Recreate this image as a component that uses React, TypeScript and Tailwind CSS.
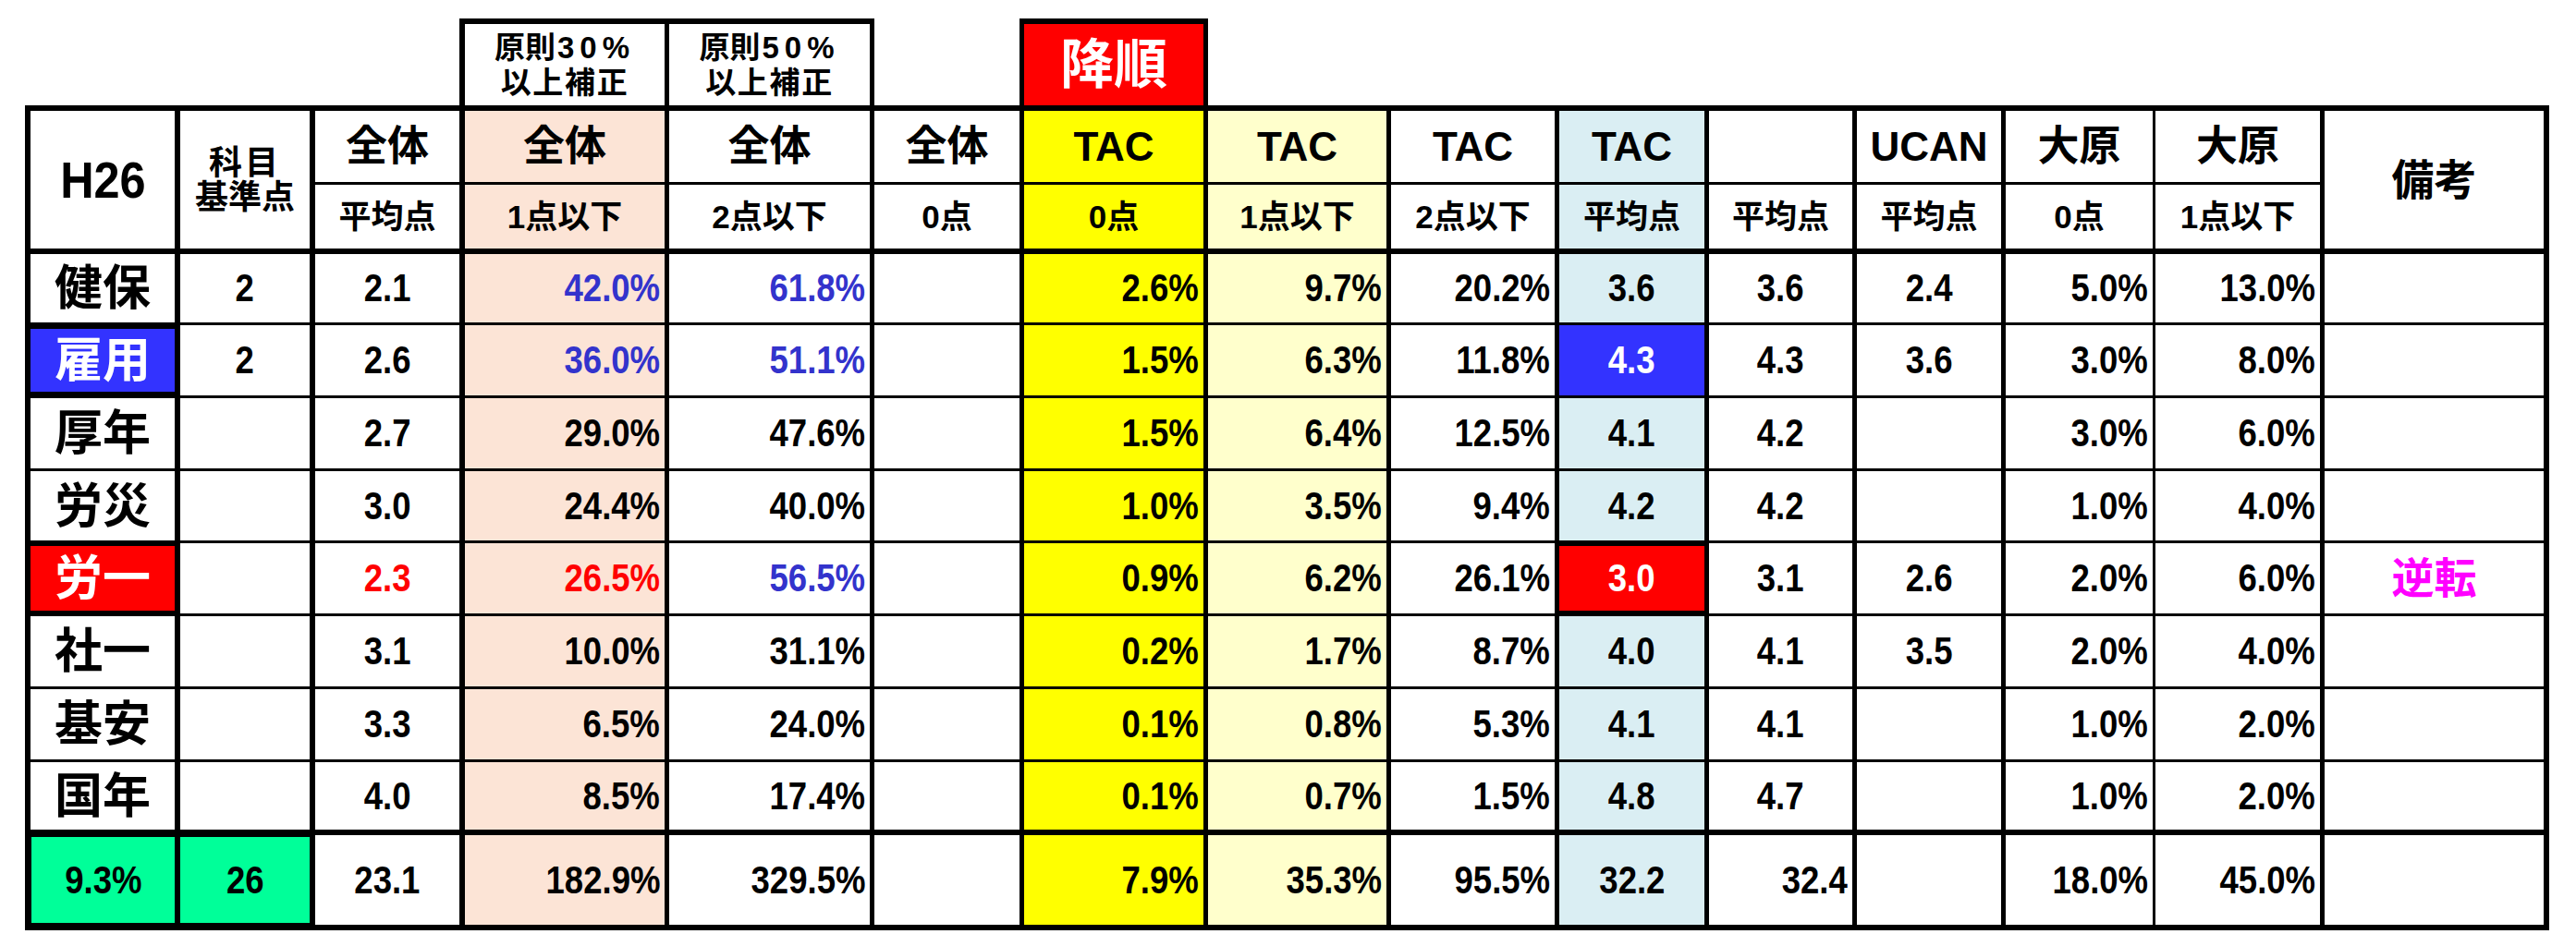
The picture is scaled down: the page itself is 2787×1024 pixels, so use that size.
import React from 'react';

const FONT = "[font-family:'Liberation_Sans','Noto_Sans_CJK_JP',sans-serif]";

const RB = [
  'border-r-[6px]', 'border-r-[6px]', 'border-r-[6px]', 'border-r-[5px]', 'border-r-[5px]',
  'border-r-[5px]', 'border-r-[5px]', 'border-r-[5px]', 'border-r-[5px]', 'border-r-[5px]',
  'border-r-[5px]', 'border-r-[5px]', 'border-r-[3px]', 'border-r-[5px]', 'border-r-[6px]',
];

const BG = [
  'bg-white', 'bg-white', 'bg-white', 'bg-[#fce4d6]', 'bg-white', 'bg-white', 'bg-[#ffff00]',
  'bg-[#ffffcc]', 'bg-white', 'bg-[#daeef3]', 'bg-white', 'bg-white', 'bg-white', 'bg-white', 'bg-white',
];

const ALIGN = ['c', 'c', 'c', 'r', 'r', 'c', 'r', 'r', 'r', 'c', 'c', 'c', 'r', 'r', 'c'];

const H1 = ['全体', '全体', '全体', '全体', 'TAC', 'TAC', 'TAC', 'TAC', '', 'UCAN', '大原', '大原'];
const H2 = ['平均点', '1点以下', '2点以下', '0点', '0点', '1点以下', '2点以下', '平均点', '平均点', '平均点', '0点', '1点以下'];

type Row = { name: string; kind: string; vals: string[] };

const DATA: Row[] = [
  { name: '健保', kind: '', vals: ['2', '2.1', 'b:42.0%', 'b:61.8%', '', '2.6%', '9.7%', '20.2%', '3.6', '3.6', '2.4', '5.0%', '13.0%', ''] },
  { name: '雇用', kind: 'B', vals: ['2', '2.6', 'b:36.0%', 'b:51.1%', '', '1.5%', '6.3%', '11.8%', 'B:4.3', '4.3', '3.6', '3.0%', '8.0%', ''] },
  { name: '厚年', kind: '', vals: ['', '2.7', '29.0%', '47.6%', '', '1.5%', '6.4%', '12.5%', '4.1', '4.2', '', '3.0%', '6.0%', ''] },
  { name: '労災', kind: '', vals: ['', '3.0', '24.4%', '40.0%', '', '1.0%', '3.5%', '9.4%', '4.2', '4.2', '', '1.0%', '4.0%', ''] },
  { name: '労一', kind: 'R', vals: ['', 'r:2.3', 'r:26.5%', 'b:56.5%', '', '0.9%', '6.2%', '26.1%', 'R:3.0', '3.1', '2.6', '2.0%', '6.0%', 'm:逆転'] },
  { name: '社一', kind: '', vals: ['', '3.1', '10.0%', '31.1%', '', '0.2%', '1.7%', '8.7%', '4.0', '4.1', '3.5', '2.0%', '4.0%', ''] },
  { name: '基安', kind: '', vals: ['', '3.3', '6.5%', '24.0%', '', '0.1%', '0.8%', '5.3%', '4.1', '4.1', '', '1.0%', '2.0%', ''] },
  { name: '国年', kind: '', vals: ['', '4.0', '8.5%', '17.4%', '', '0.1%', '0.7%', '1.5%', '4.8', '4.7', '', '1.0%', '2.0%', ''] },
];

const TOTAL = ['G:9.3%', 'G:26', '23.1', '182.9%', '329.5%', '', '7.9%', '35.3%', '95.5%', '32.2', '>:32.4', '', '18.0%', '45.0%', ''];

function parse(raw: string) {
  const m = raw.match(/^([bBrRmG>]):(.*)$/);
  if (m) return { flag: m[1], v: m[2] };
  return { flag: '', v: raw };
}

function ValueCell({ raw, c, rowPos }: { raw: string; c: number; rowPos: 'data' | 'last' | 'total' }) {
  const { flag, v } = parse(raw);
  let bg = BG[c];
  if (flag === 'B') bg = 'bg-[#3333ff]';
  if (flag === 'R') bg = 'bg-[#ff0000]';
  if (flag === 'G') bg = 'bg-[#00ff99]';
  let color = 'text-black';
  if (flag === 'b') color = 'text-[#3333cc]';
  if (flag === 'r') color = 'text-[#ff0000]';
  if (flag === 'B' || flag === 'R') color = 'text-white';
  if (flag === 'm') color = 'text-[#ff00ff]';
  const right = flag === '>' || ALIGN[c] === 'r';
  let bt = '';
  let bb = 'border-b-[3px]';
  if (rowPos === 'last') bb = '';
  if (rowPos === 'total') {
    bt = 'border-t-[6px]';
    bb = 'border-b-[6px]';
  }
  if (flag === 'R') {
    bt = 'border-t-[3px]';
    bb = 'border-b-[6px]';
  }
  if (flag === 'G') {
    bt = 'border-t-[8px]';
    bb = 'border-b-[8px]';
  }
  const bl = c === 0 ? (flag === 'G' ? 'border-l-[7px]' : 'border-l-[6px]') : '';
  const just = right ? 'justify-end pr-[5px]' : 'justify-center';
  const isCjk = flag === 'm';
  return (
    <div className={`${RB[c]} ${bl} ${bt} ${bb} border-black ${bg} ${color} flex items-center ${just} font-bold leading-none`}>
      {isCjk ? (
        <span className="text-[46px]">{v}</span>
      ) : (
        <span className={`inline-block text-[42px] scale-x-[0.87] ${right ? 'origin-right' : 'origin-center'}`}>{v}</span>
      )}
    </div>
  );
}

export default function App() {
  const cells: React.ReactNode[] = [];

  // super header row
  for (let c = 0; c < 15; c++) {
    if (c === 2) {
      cells.push(<div key={`s${c}`} className="border-r-[6px] border-black" />);
    } else if (c === 3 || c === 4) {
      cells.push(
        <div
          key={`s${c}`}
          className="border-t-[6px] border-r-[5px] border-black bg-white flex flex-col items-center justify-center text-[33px] leading-[38px] font-bold pt-[2px]"
        >
          <div>
            原則<span className="tracking-[0.18em] ml-[2px]">{c === 3 ? '30%' : '50%'}</span>
          </div>
          <div className="tracking-[0.05em]">以上補正</div>
        </div>
      );
    } else if (c === 5) {
      cells.push(<div key={`s${c}`} className="border-r-[5px] border-black" />);
    } else if (c === 6) {
      cells.push(
        <div
          key={`s${c}`}
          className="border-t-[6px] border-r-[5px] border-black bg-[#ff0000] flex items-center justify-center text-white text-[58px] font-bold leading-none"
        >
          降順
        </div>
      );
    } else {
      cells.push(<div key={`s${c}`} />);
    }
  }

  // header row 1
  cells.push(
    <div
      key="h26"
      className="row-span-2 border-t-[6px] border-l-[6px] border-r-[6px] border-b-[6px] border-black bg-white flex items-center justify-center font-bold leading-none"
    >
      <span className="inline-block text-[56px] scale-x-[0.9]">H26</span>
    </div>
  );
  cells.push(
    <div
      key="kamoku"
      className="row-span-2 border-t-[6px] border-r-[6px] border-b-[6px] border-black bg-white flex flex-col items-center justify-center font-bold text-[36px] leading-[37px]"
    >
      <div className="tracking-[0.08em]">科目</div>
      <div>基準点</div>
    </div>
  );
  H1.forEach((t, i) => {
    const c = i + 2;
    const latin = /^[A-Z]+$/.test(t);
    cells.push(
      <div
        key={`h1${c}`}
        className={`border-t-[6px] border-b-[3px] ${RB[c]} border-black ${BG[c]} flex items-center justify-center font-bold leading-none`}
      >
        {latin ? <span className="text-[44px]">{t}</span> : <span className="text-[45px]">{t}</span>}
      </div>
    );
  });
  cells.push(
    <div
      key="biko"
      className="row-span-2 border-t-[6px] border-r-[6px] border-b-[6px] border-black bg-white flex items-center justify-center font-bold leading-none text-[46px]"
    >
      備考
    </div>
  );

  // header row 2
  H2.forEach((t, i) => {
    const c = i + 2;
    cells.push(
      <div
        key={`h2${c}`}
        className={`border-b-[6px] ${RB[c]} border-black ${BG[c]} flex items-center justify-center font-bold leading-none text-[35px]`}
      >
        {t}
      </div>
    );
  });

  // data rows
  DATA.forEach((row, ri) => {
    const last = ri === DATA.length - 1;
    let bg = 'bg-white';
    let color = 'text-black';
    let bt = '';
    let bb = last ? '' : 'border-b-[3px]';
    if (row.kind === 'B') {
      bg = 'bg-[#3333ff]';
      color = 'text-white';
      bt = 'border-t-[4px]';
      bb = 'border-b-[7px]';
    }
    if (row.kind === 'R') {
      bg = 'bg-[#ff0000]';
      color = 'text-white';
      bt = 'border-t-[3px]';
      bb = 'border-b-[6px]';
    }
    cells.push(
      <div
        key={`n${ri}`}
        className={`border-l-[6px] ${RB[0]} ${bt} ${bb} border-black ${bg} ${color} flex items-center justify-center font-bold leading-none text-[52px]`}
      >
        {row.name}
      </div>
    );
    row.vals.forEach((v, i) => {
      cells.push(<ValueCell key={`d${ri}-${i}`} raw={v} c={i + 1} rowPos={last ? 'last' : 'data'} />);
    });
  });

  // total row
  TOTAL.forEach((v, c) => {
    cells.push(<ValueCell key={`t${c}`} raw={v} c={c} rowPos="total" />);
  });

  return (
    <div className={`min-h-[1024px] w-full bg-white pt-[20px] pl-[27px] text-black ${FONT}`}>
      <div className="grid w-max grid-cols-[168px_146px_162px_221px_222px_162px_199px_198px_182px_162px_160px_161px_162px_183px_243px] grid-rows-[94px_86px_75px_77px_79px_79px_78px_79px_79px_79px_73px_109px]">
        {cells}
      </div>
    </div>
  );
}
